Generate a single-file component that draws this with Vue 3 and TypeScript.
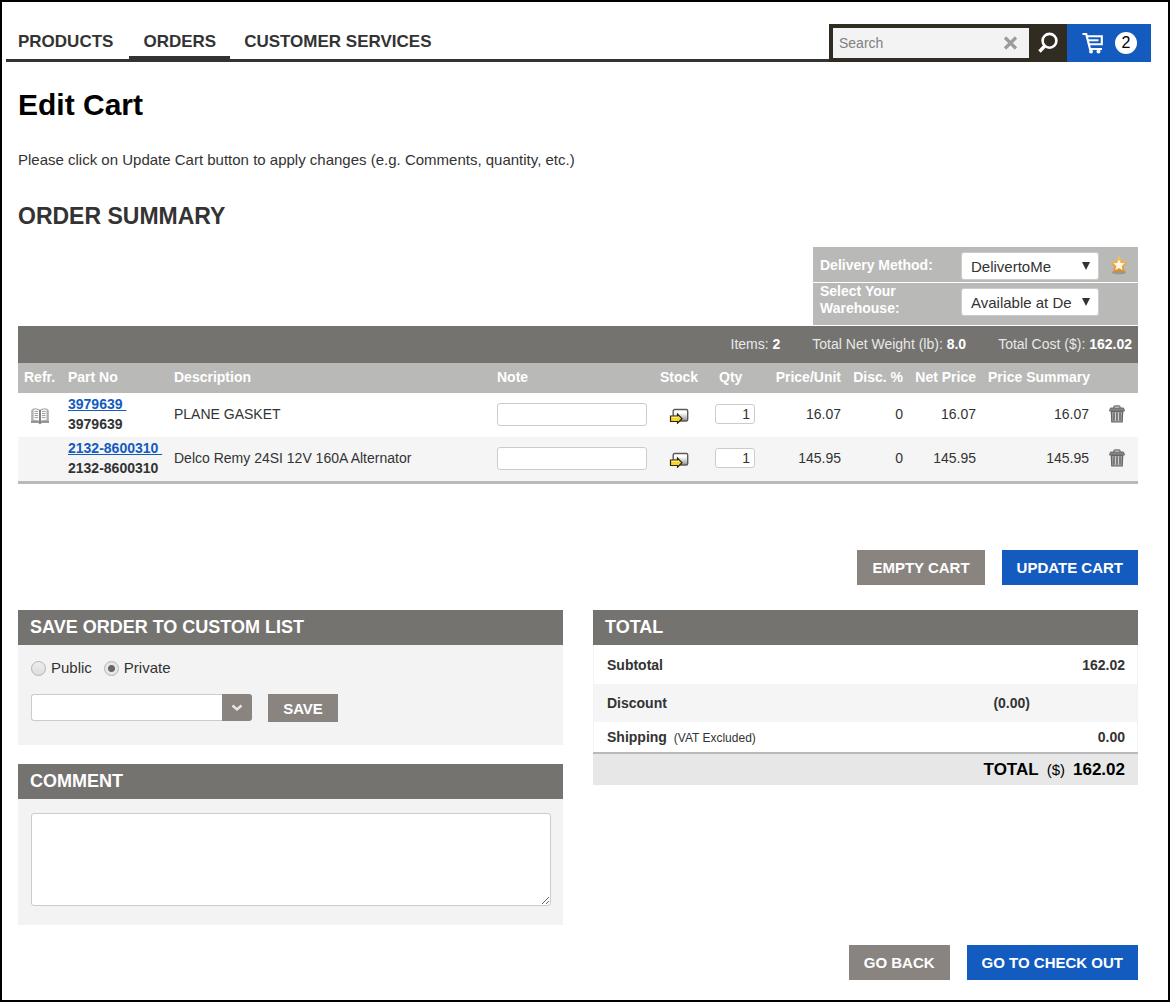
<script setup lang="ts">
import { computed, ref } from 'vue'

interface CartLine {
  partNo: string
  description: string
  hasReference: boolean
  note: string
  qty: string
  price: number
  discount: number
}

const navItems = ['PRODUCTS', 'ORDERS', 'CUSTOMER SERVICES']
const activeNav = ref('ORDERS')
const search = ref('')
const deliveryMethod = ref('DelivertoMe')
const warehouse = ref('Available at Delivery Warehouse')
const visibility = ref('private')
const listName = ref('')
const comment = ref('')

const lines = ref<CartLine[]>([
  { partNo: '3979639', description: 'PLANE GASKET', hasReference: true, note: '', qty: '1', price: 16.07, discount: 0 },
  { partNo: '2132-8600310', description: 'Delco Remy 24SI 12V 160A Alternator', hasReference: false, note: '', qty: '1', price: 145.95, discount: 0 },
])

const total = computed(() =>
  lines.value.reduce((sum, l) => sum + l.price * Number(l.qty), 0).toFixed(2),
)

function removeLine(index: number) {
  lines.value.splice(index, 1)
}
</script>

<template>
  <div class="page">
    <header class="top">
      <nav class="nav">
        <a
          v-for="item in navItems"
          :key="item"
          href="#"
          class="nav-link"
          :class="{ active: item === activeNav }"
          @click.prevent="activeNav = item"
        >{{ item }}</a>
      </nav>
      <form class="search" @submit.prevent>
        <div class="search-field">
          <input v-model="search" type="text" placeholder="Search" aria-label="Search" />
          <button type="button" class="clear" aria-label="Clear search" @click="search = ''">
            <svg width="15" height="14" viewBox="0 0 15 14"><path d="M2 1.500L13 12.500M13 1.500L2 12.500" stroke="#9c9c9c" stroke-width="3.200" /></svg>
          </button>
        </div>
        <button type="submit" class="search-go" aria-label="Go">
          <svg width="20" height="22" viewBox="0 0 20 22" fill="none" stroke="#fff">
            <circle cx="11.500" cy="8.800" r="6.900" stroke-width="2.600" />
            <path d="M7 13.800L1.500 19.500" stroke-width="3.400" />
          </svg>
        </button>
      </form>
      <a href="#" class="cart" aria-label="Cart">
        <svg width="22" height="22" viewBox="0 0 22 22" fill="none" stroke="#fff">
          <path d="M0.500 2H4.200L8 17H20" stroke-width="2.200" />
          <path d="M5 4.300H19.800V12.200H7" stroke-width="2.100" />
          <path d="M6 8.300H16.500" stroke-width="2" />
          <circle cx="9" cy="19.500" r="2" fill="#fff" stroke="none" />
          <circle cx="16.500" cy="19.500" r="2" fill="#fff" stroke="none" />
        </svg>
        <span class="count">{{ lines.length }}</span>
      </a>
    </header>

    <main class="content">
      <h1>Edit Cart</h1>
      <p class="intro">Please click on Update Cart button to apply changes (e.g. Comments, quantity, etc.)</p>
      <h2>ORDER SUMMARY</h2>

      <div class="delivery">
        <div class="delivery-row method">
          <label for="method">Delivery Method:</label>
          <span class="select">
            <select id="method" v-model="deliveryMethod">
              <option>DelivertoMe</option>
            </select>
          </span>
          <svg class="star" width="18" height="20" viewBox="0 0 18 20">
            <defs>
              <linearGradient id="gold" x1="0" y1="0" x2="0" y2="1">
                <stop offset="0" stop-color="#f6c45c" />
                <stop offset="1" stop-color="#e08a1e" />
              </linearGradient>
            </defs>
            <ellipse cx="9" cy="17.500" rx="7" ry="1.800" fill="#8d8984" opacity=".7" />
            <path d="M9 2L11.200 7.100L16.500 7.600L12.600 11.300L14 17L9 14L4 17L5.400 11.300L1.500 7.600L6.800 7.100Z" fill="#fff8e6" stroke="url(#gold)" stroke-width="1.700" stroke-linejoin="round" />
          </svg>
        </div>
        <div class="delivery-row warehouse">
          <label for="warehouse">Select Your Warehouse:</label>
          <span class="select">
            <select id="warehouse" v-model="warehouse">
              <option>Available at Delivery Warehouse</option>
            </select>
          </span>
        </div>
      </div>

      <div class="stats">
        <span>Items: <b>{{ lines.length }}</b></span>
        <span>Total Net Weight (lb): <b>8.0</b></span>
        <span>Total Cost ($): <b>{{ total }}</b></span>
      </div>

      <table class="items">
        <thead>
          <tr>
            <th class="c-ref">Refr.</th>
            <th class="c-part">Part No</th>
            <th>Description</th>
            <th class="c-note">Note</th>
            <th class="c-stock">Stock</th>
            <th class="c-qty">Qty</th>
            <th class="c-price num">Price/Unit</th>
            <th class="c-disc num">Disc. %</th>
            <th class="c-net num">Net Price</th>
            <th class="c-sum num">Price Summary</th>
            <th class="c-del"></th>
          </tr>
        </thead>
        <tbody>
          <tr v-for="(line, i) in lines" :key="line.partNo">
            <td class="c-ref">
              <svg v-if="line.hasReference" width="20" height="18" viewBox="0 0 20 18">
                <path d="M1 3.500L2.500 2Q6 .8 9.800 2.600Q13.500 .8 17.500 2L19 3.500V15.500H11L10 17L9 15.500H1Z" fill="#bdbdbd" />
                <path d="M3 2.200Q6.500 1.300 9.500 3.200V14.500Q6.500 12.800 3 13.500Z" fill="#fafafa" stroke="#9a9a9a" stroke-width=".8" />
                <path d="M17 2.200Q13.500 1.300 10.500 3.200V14.500Q13.500 12.800 17 13.500Z" fill="#fafafa" stroke="#9a9a9a" stroke-width=".8" />
                <path d="M4.500 4.500H8M4.500 6.500H8M4.500 8.500H8M4.500 10.500H8M12 4.500H15.500M12 6.500H15.500M12 8.500H15.500M12 10.500H15.500" stroke="#a0a0a0" />
                <path d="M10 3V16.500" stroke="#6c6c6c" stroke-width="1.300" />
                <path d="M1 15H8.500L10 16.500L11.500 15H19" fill="none" stroke="#858585" stroke-width="1.300" />
              </svg>
            </td>
            <td class="c-part">
              <a href="#" @click.prevent>{{ line.partNo }}&nbsp;</a>
              <span>{{ line.partNo }}</span>
            </td>
            <td>{{ line.description }}</td>
            <td class="c-note"><input v-model="line.note" type="text" aria-label="Note" /></td>
            <td class="c-stock">
              <svg width="20" height="16" viewBox="0 0 20 16">
                <defs>
                  <linearGradient id="box" x1="0" y1="0" x2="0" y2="1">
                    <stop offset=".3" stop-color="#fff" />
                    <stop offset="1" stop-color="#8f8f8f" />
                  </linearGradient>
                </defs>
                <rect x="4.200" y="1.500" width="14.500" height="11.500" rx="1.500" fill="url(#box)" stroke="#5b5b5b" stroke-width="1.400" />
                <path d="M1.500 8H8.500V6L13 10.700L8.500 15.200V13.500H1.500Z" fill="#f8d32f" stroke="#2e2608" stroke-width="1.200" />
                <path d="M2.500 9.300H9.500" fill="none" stroke="#fff2a0" />
              </svg>
            </td>
            <td class="c-qty"><input v-model="line.qty" type="text" aria-label="Quantity" /></td>
            <td class="num">{{ line.price.toFixed(2) }}</td>
            <td class="num">{{ line.discount }}</td>
            <td class="num">{{ line.price.toFixed(2) }}</td>
            <td class="num">{{ (line.price * Number(line.qty)).toFixed(2) }}</td>
            <td class="c-del">
              <button type="button" aria-label="Remove" @click="removeLine(i)">
                <svg width="16" height="18" viewBox="0 0 16 18">
                  <path d="M5 3.500V2Q5 1 6 1H10Q11 1 11 2V3.500" fill="none" stroke="#777" stroke-width="1.400" />
                  <path d="M1.500 3H14.500L15.500 6H.5Z" fill="#858585" stroke="#6a6a6a" />
                  <path d="M2.300 6.500H13.700L13.200 17H2.800Z" fill="#a0a0a0" stroke="#666" stroke-width="1.200" />
                  <path d="M5 7.500V15.500M8 7.500V15.500M11 7.500V15.500" stroke="#5f5f5f" stroke-width="1.100" />
                  <path d="M6.500 7.500V15.500M9.500 7.500V15.500" stroke="#d0d0d0" />
                </svg>
              </button>
            </td>
          </tr>
        </tbody>
      </table>

      <div class="actions cart-actions">
        <button type="button" class="btn">EMPTY CART</button>
        <button type="button" class="btn primary">UPDATE CART</button>
      </div>

      <div class="columns">
        <div class="column">
          <section class="panel">
            <h3>SAVE ORDER TO CUSTOM LIST</h3>
            <div class="panel-body save-body">
              <div class="radios">
                <label><input v-model="visibility" type="radio" name="visibility" value="public" />Public</label>
                <label><input v-model="visibility" type="radio" name="visibility" value="private" />Private</label>
              </div>
              <div class="save-row">
                <div class="combo">
                  <input v-model="listName" type="text" aria-label="List name" />
                  <button type="button" aria-label="Show lists">
                    <svg width="12" height="8" viewBox="0 0 12 8"><path d="M1.500 1.500L6 5.500L10.500 1.500" fill="none" stroke="#e8e6e5" stroke-width="2.400" /></svg>
                  </button>
                </div>
                <button type="button" class="btn small">SAVE</button>
              </div>
            </div>
          </section>
          <section class="panel">
            <h3 id="comment-title">COMMENT</h3>
            <div class="panel-body comment-body">
              <textarea v-model="comment" aria-labelledby="comment-title"></textarea>
            </div>
          </section>
        </div>

        <div class="column">
          <section class="panel">
            <h3>TOTAL</h3>
            <table class="totals">
              <tbody>
                <tr class="subtotal">
                  <th>Subtotal</th>
                  <td></td>
                  <td class="last">{{ total }}</td>
                </tr>
                <tr class="discount">
                  <th>Discount</th>
                  <td>(0.00)</td>
                  <td class="last"></td>
                </tr>
                <tr class="shipping">
                  <th>Shipping <small>(VAT Excluded)</small></th>
                  <td></td>
                  <td class="last">0.00</td>
                </tr>
              </tbody>
              <tfoot>
                <tr>
                  <td colspan="3"><b>TOTAL</b><span>($)</span><b>{{ total }}</b></td>
                </tr>
              </tfoot>
            </table>
          </section>
        </div>
      </div>

      <div class="actions">
        <button type="button" class="btn">GO BACK</button>
        <button type="button" class="btn primary">GO TO CHECK OUT</button>
      </div>
    </main>
  </div>
</template>

<style>
body {
  margin: 0;
  background: #fff;
}
</style>

<style scoped>
* {
  box-sizing: border-box;
}

.page {
  min-height: 100vh;
  border: 2px solid #000;
  padding-top: 22px;
  color: #333;
  font-family: "Liberation Sans", Arial, sans-serif;
  font-size: 14px;
}

svg {
  display: block;
}

input,
select,
textarea,
button {
  margin: 0;
  font-family: inherit;
  color: #333;
}

button {
  padding: 0;
  border: 0;
  background: none;
}

/* Header */
.top {
  display: flex;
  height: 38px;
  margin: 0 17px 0 4px;
}

.nav {
  display: flex;
  flex: 1;
  border-bottom: 3px solid #333;
}

.nav-link {
  padding: 0 14px;
  color: #333;
  font-size: 17px;
  font-weight: bold;
  line-height: 35px;
  text-decoration: none;
  white-space: nowrap;
}

.nav-link:first-child {
  padding: 0 16px 0 12px;
}

.nav-link.active {
  box-shadow: inset 0 -3px #333;
}

.search {
  display: flex;
  width: 238px;
  padding: 4px 0 4px 4px;
  background: #312c22;
}

.search-field {
  display: flex;
  flex: 1;
  align-items: center;
  min-width: 0;
  padding-right: 11px;
  background: #f3f3f3;
}

.search-field input {
  flex: 1;
  min-width: 0;
  height: 28px;
  padding: 0 6px;
  border: 0;
  background: none;
  font-size: 14px;
}

.search-field input::placeholder {
  color: #808080;
}

.search-go {
  display: flex;
  flex: none;
  align-items: center;
  justify-content: center;
  width: 38px;
}

.cart {
  display: flex;
  align-items: center;
  gap: 11px;
  width: 84px;
  padding-left: 15px;
  background: #135bbf;
  text-decoration: none;
}

.count {
  width: 22px;
  height: 22px;
  border-radius: 50%;
  background: #fff;
  color: #000;
  font-size: 16px;
  line-height: 22px;
  text-align: center;
}

/* Headings */
.content {
  padding: 25px 30px 20px 16px;
}

h1,
h2,
h3,
p {
  margin: 0;
}

h1 {
  color: #000;
  font-size: 30px;
  line-height: 36px;
}

.intro {
  margin-top: 27px;
  font-size: 15px;
  line-height: 20px;
}

h2 {
  margin-top: 32px;
  font-size: 23px;
  line-height: 28px;
}

/* Delivery box */
.delivery {
  width: 325px;
  margin: 17px 0 1px auto;
}

.delivery-row {
  display: flex;
  align-items: flex-start;
  padding-left: 7px;
  background: #b9b9b7;
}

.method {
  height: 35px;
  margin-bottom: 1px;
}

.warehouse {
  height: 42px;
}

.delivery-row label {
  width: 141px;
  padding-right: 30px;
  color: #fff;
  font-weight: bold;
  line-height: 17px;
}

.method label {
  padding: 10px 0 0;
}

.select {
  position: relative;
  width: 138px;
  margin-top: 5px;
}

.select::after {
  content: "";
  position: absolute;
  top: 10px;
  right: 9px;
  border: 4px solid transparent;
  border-top: 8px solid #333;
  border-bottom: 0;
  pointer-events: none;
}

.select select {
  display: block;
  width: 138px;
  height: 28px;
  padding: 0 26px 0 9px;
  border: 1px solid #ccc;
  border-radius: 3px;
  appearance: none;
  background: #fff;
  font-size: 15px;
}

.star {
  margin: 8px 0 0 11px;
}

/* Item table */
.stats {
  display: flex;
  justify-content: flex-end;
  gap: 32px;
  padding-right: 6px;
  background: #747370;
  color: #e8e8e8;
  line-height: 37px;
}

.stats b {
  color: #fff;
}

.items {
  width: 100%;
  border-spacing: 0;
  border-bottom: 3px solid #b9b9b9;
  table-layout: fixed;
}

.items th,
.items td {
  padding: 0 6px;
  text-align: left;
  white-space: nowrap;
}

.items th {
  height: 30px;
  padding-bottom: 2px;
  background: #b9b9b7;
  color: #fff;
}

.items td {
  height: 44px;
  padding-bottom: 2px;
}

.items tbody tr:nth-child(even) {
  background: #f5f5f5;
}

.items .num {
  text-align: right;
}

.items .c-ref { width: 44px; }
.items .c-part { width: 106px; }
.items .c-note { width: 158px; padding-right: 0; }
.items .c-stock { width: 60px; }
.items th.c-stock { text-align: center; }
.items .c-qty { width: 52px; }
.items th.c-qty { padding-left: 10px; }
.items .c-price { width: 86px; }
.items .c-disc { width: 62px; }
.items .c-net { width: 73px; }
.items .c-sum { width: 113px; }
.items .c-del { width: 43px; }
.items td.c-ref,
.items td.c-stock { padding-top: 2px; padding-bottom: 0; }

td.c-ref svg,
td.c-stock svg,
td.c-del button {
  margin: 0 auto;
}

td.c-del button {
  display: block;
}

td.c-part {
  font-weight: bold;
  line-height: 20px;
}

td.c-part a,
td.c-part span {
  display: block;
  width: max-content;
}

td.c-part a {
  color: #135bbf;
}

.items input {
  display: block;
  border: 1px solid #ccc;
  border-radius: 3px;
  background: #fff;
  font-size: 14px;
}

.c-note input {
  width: 150px;
  height: 23px;
  padding: 0 6px;
}

.c-qty input {
  width: 40px;
  height: 20px;
  padding: 0 4px;
  text-align: right;
}

/* Buttons */
.actions {
  display: flex;
  justify-content: flex-end;
  gap: 17px;
  margin-top: 20px;
}

.cart-actions {
  margin: 66px 0 25px;
}

.btn {
  height: 35px;
  padding: 0 15px;
  background: #8a8481;
  color: #fff;
  font-size: 15px;
  font-weight: bold;
}

.btn.primary {
  background: #135bbf;
}

.btn.small {
  width: 70px;
  height: 28px;
}

/* Panels */
.columns {
  display: flex;
  align-items: flex-start;
  gap: 30px;
}

.column {
  display: flex;
  flex: 1;
  flex-direction: column;
  gap: 19px;
}

.panel h3 {
  padding-left: 12px;
  background: #747370;
  color: #fff;
  font-size: 18px;
  line-height: 35px;
}

.panel-body {
  background: #f3f3f3;
}

.save-body {
  padding: 13px 13px 23px;
}

.radios {
  display: flex;
  gap: 12px;
  font-size: 15px;
  line-height: 20px;
}

.radios label {
  display: flex;
  align-items: center;
  gap: 5px;
}

.radios input {
  width: 15px;
  height: 15px;
  border: 1px solid #b4b4b4;
  border-radius: 50%;
  appearance: none;
  background: linear-gradient(#eee, #ddd);
}

.radios input:checked {
  background: radial-gradient(circle, #666 0 3px, #e6e6e6 4px);
}

.save-row {
  display: flex;
  gap: 16px;
  margin-top: 16px;
}

.combo {
  display: flex;
  height: 27px;
}

.combo input {
  width: 191px;
  padding: 0 6px;
  border: 1px solid #ccc;
  border-right: 0;
  border-radius: 3px 0 0 3px;
  background: #fff;
  font-size: 14px;
}

.combo button {
  display: flex;
  align-items: center;
  justify-content: center;
  width: 30px;
  border-radius: 0 3px 3px 0;
  background: #8a8481;
}

.comment-body {
  padding: 14px 12px 19px 13px;
}

textarea {
  display: block;
  width: 100%;
  height: 93px;
  padding: 6px;
  border: 1px solid #ccc;
  border-radius: 3px;
  background: #fff;
  font-size: 14px;
}

/* Totals */
.totals {
  width: 100%;
  border-spacing: 0;
}

.totals th,
.totals td {
  padding: 0 0 0 14px;
  font-weight: bold;
  text-align: right;
}

.totals th {
  text-align: left;
}

.totals .last {
  width: 108px;
  padding-right: 13px;
}

.totals tbody tr {
  height: 38px;
  box-shadow: inset 1px 0 #f3f3f3, inset -1px 0 #f3f3f3;
}

.totals tbody .subtotal {
  height: 39px;
}

.totals .discount {
  background: #f5f5f5;
}

.totals tbody .shipping {
  height: 30px;
}

.totals small {
  margin-left: 3px;
  font-size: 12px;
  font-weight: normal;
}

.totals tfoot td {
  height: 33px;
  padding-right: 13px;
  border-top: 2px solid #b9b9b9;
  background: #e7e7e7;
  color: #000;
  font-size: 17px;
}

.totals tfoot span {
  margin: 0 8px;
  font-size: 15px;
  font-weight: normal;
}
</style>
